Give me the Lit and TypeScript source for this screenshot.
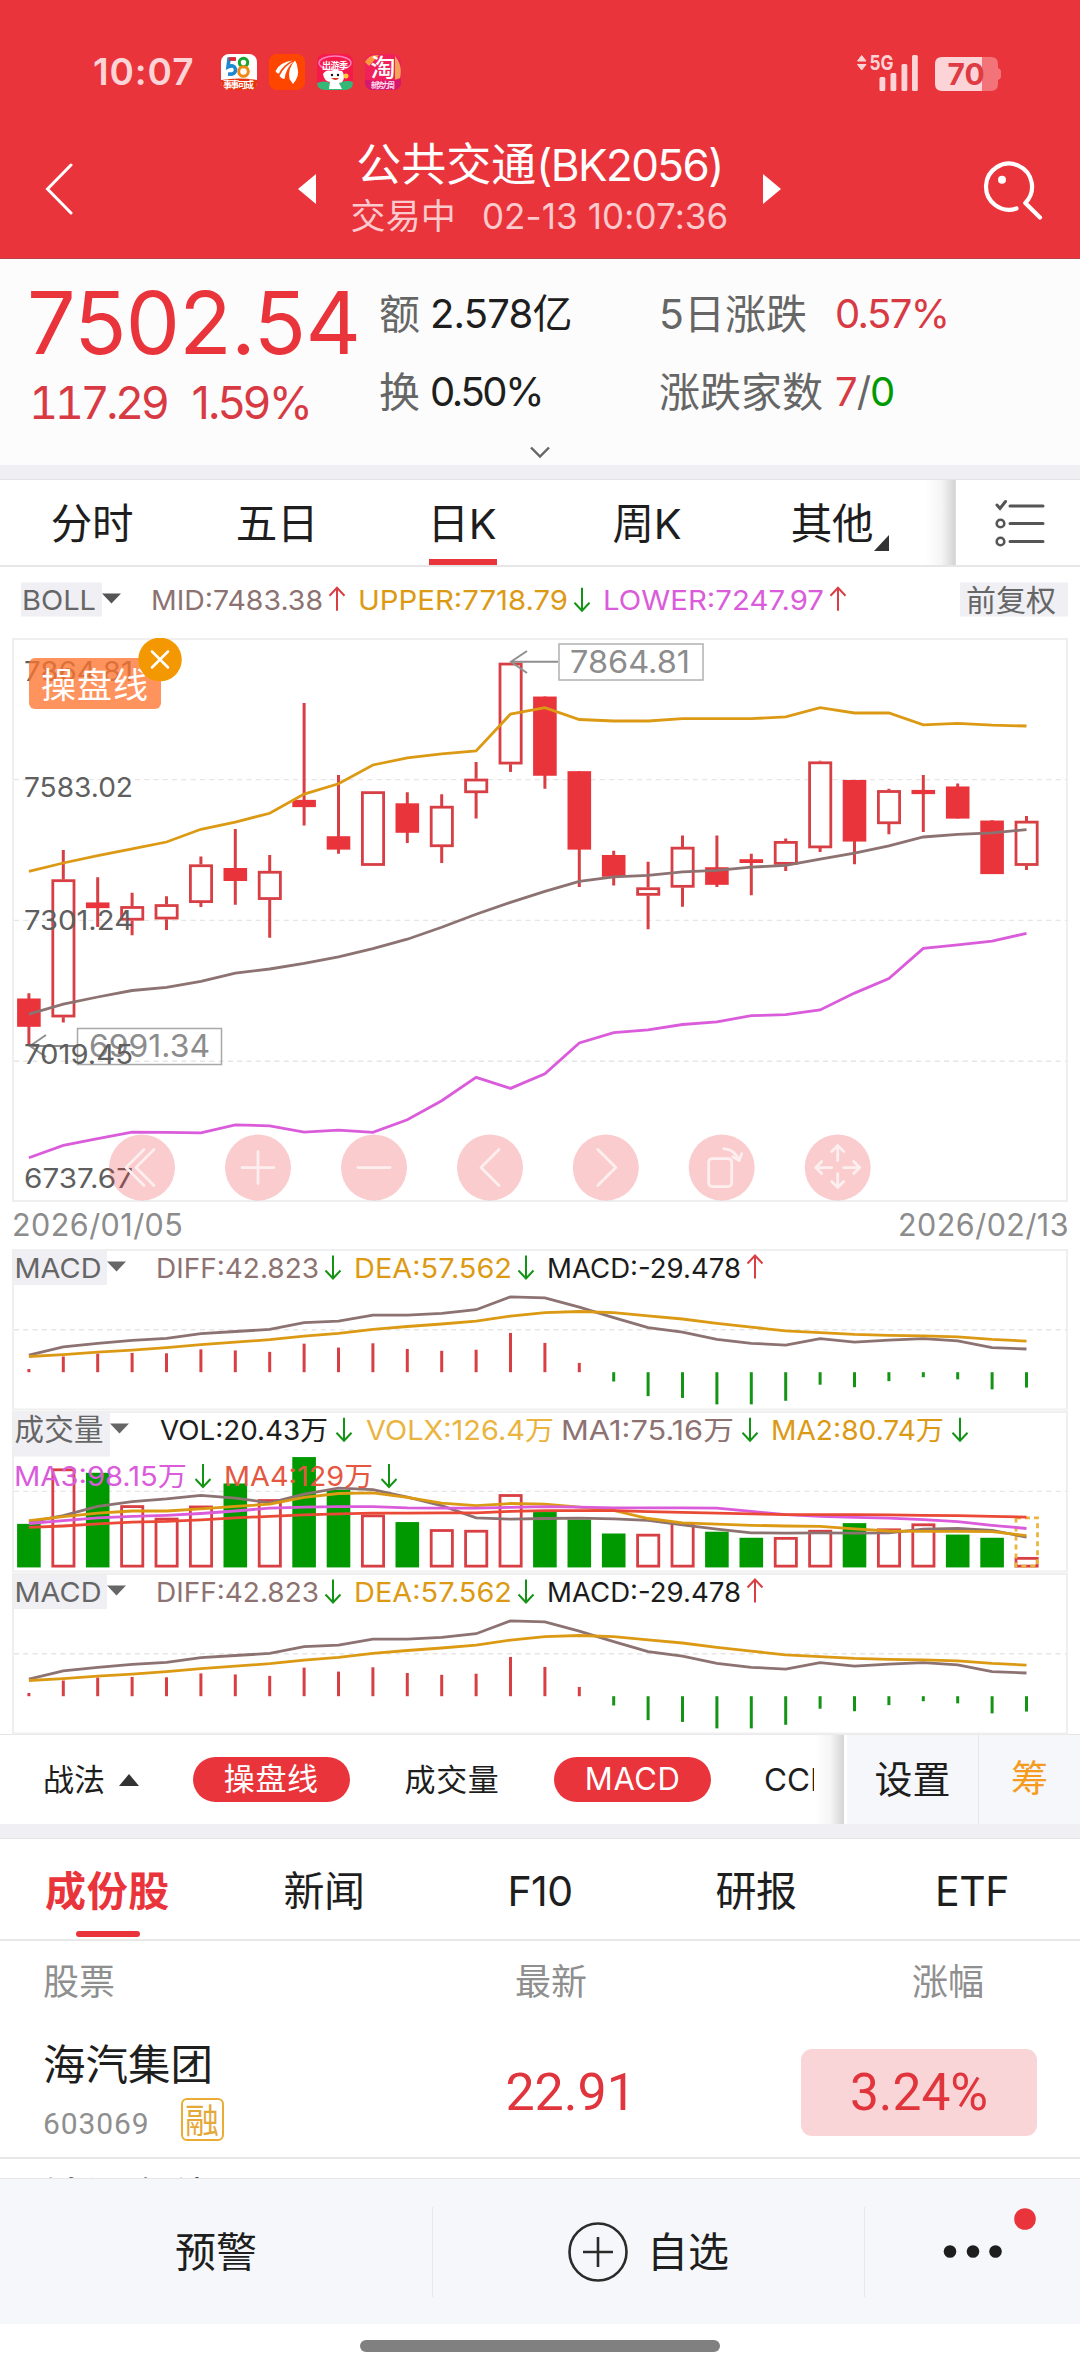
import { LitElement, html, css, svg } from "lit";
import { customElement, property } from "lit/decorators.js";

const RED = "#ea343b";
const WICK = "#d83f45";
const GREEN = "#009a00";
const BROWN = "#8d7272";
const GOLD = "#dc9a14";
const PINK = "#da5cdb";
const BRICK = "#ea4a35";

const FIRST_X = 28.9;
const STEP_X = 34.4;
const xAt = (i: number) => FIRST_X + STEP_X * i;

type Scale = (v: number) => number;
const priceY: Scale = (v) => v * 0.3827 - 18;
const macdY: Scale = (v) => (v - 165) / 2.8;
const volY: Scale = (v) => (v - 619) / 2.8;

const polyline = (values: number[], y: Scale, color: string, width = 2.8) => svg`
  <polyline fill="none" stroke=${color} stroke-width=${width}
    points=${values.map((v, i) => `${xAt(i).toFixed(1)},${y(v).toFixed(1)}`).join(" ")} />`;

/* wick top, body top, body bottom, wick bottom, filled */
const CANDLES: [number, number, number, number, boolean][] = [
  [975, 989, 1063, 1110, true], [601, 678, 1038, 1052, false], [672, 738, 753, 802, true],
  [713, 748, 785, 824, false], [722, 743, 782, 810, false], [618, 639, 739, 750, false],
  [546, 648, 682, 744, true], [614, 656, 731, 830, false], [217, 470, 489, 537, true],
  [405, 565, 600, 611, true], [448, 448, 642, 642, false], [450, 479, 556, 583, true],
  [455, 486, 593, 635, false], [371, 415, 452, 519, false], [112, 112, 377, 397, false],
  [200, 200, 407, 441, true], [395, 395, 600, 698, true], [603, 614, 671, 694, true],
  [632, 699, 720, 808, false], [563, 593, 699, 749, false], [563, 646, 692, 698, true],
  [611, 625, 635, 719, true], [571, 578, 639, 656, false], [368, 370, 596, 606, false],
  [418, 418, 579, 638, true], [441, 445, 533, 560, false], [405, 444, 455, 554, true],
  [427, 435, 519, 519, true], [523, 524, 664, 664, true], [512, 525, 642, 653, false],
];
const UPPER = [657, 635, 616, 598, 580, 547, 528, 505, 455, 428, 379, 360, 350, 342, 246, 229, 260, 264, 264, 258, 258, 258, 253, 229, 243, 243, 274, 270, 275, 277];
const MID = [1030, 1004, 985, 968, 960, 944, 923, 912, 897, 880, 859, 834, 803, 769, 738, 709, 683, 671, 667, 658, 654, 646, 641, 625, 609, 590, 567, 560, 556, 548];
const LOWER = [1405, 1373, 1355, 1338, 1339, 1340, 1319, 1322, 1338, 1333, 1339, 1306, 1256, 1195, 1224, 1186, 1105, 1078, 1071, 1057, 1050, 1034, 1031, 1019, 975, 937, 858, 849, 839, 819];

const DIFF = [462, 439, 429, 421, 415, 402, 396, 390, 371, 367, 350, 350, 345, 335, 299, 302, 328, 357, 385, 398, 418, 429, 434, 416, 426, 420, 416, 422, 441, 445];
const DEA = [466, 461, 454, 448, 441, 433, 426, 419, 409, 401, 390, 382, 375, 367, 353, 343, 340, 343, 352, 361, 373, 384, 394, 399, 404, 407, 408, 411, 418, 423];
const HIST = [501, 466, 458, 456, 457, 446, 449, 453, 430, 441, 429, 445, 450, 447, 400, 428, 484, 536, 577, 582, 600, 600, 590, 545, 552, 535, 524, 530, 558, 553];
const HIST_BASE = 510;

/* bar top, falling day */
const VOLUMES: [number, boolean][] = [
  [935, true], [780, false], [792, true], [883, false], [918, false], [884, false], [822, true],
  [866, false], [748, true], [840, true], [909, false], [930, true], [950, false], [952, false],
  [852, false], [902, true], [923, true], [962, true], [963, false], [930, false], [957, true],
  [974, true], [972, false], [952, false], [933, true], [948, false], [934, false], [965, true],
  [974, true], [1028, false],
];
const VOL_BASE = 1057;
const MA1 = [930, 912, 886, 873, 865, 855, 863, 876, 852, 835, 839, 860, 884, 918, 922, 920, 919, 921, 925, 938, 950, 960, 961, 960, 961, 960, 950, 948, 953, 972];
const MA2 = [926, 915, 905, 899, 899, 893, 886, 880, 861, 850, 848, 861, 877, 884, 878, 880, 888, 897, 920, 932, 936, 939, 941, 942, 949, 955, 956, 956, 957, 968];
const MA3 = [934, 926, 918, 914, 911, 906, 899, 891, 888, 887, 887, 890, 891, 891, 889, 887, 888, 890, 890, 890, 891, 900, 909, 914, 917, 919, 923, 929, 939, 948];
const MA4 = [945, 941, 935, 930, 928, 924, 918, 914, 910, 907, 905, 905, 904, 904, 900, 898, 898, 898, 901, 903, 905, 907, 909, 909, 909, 910, 911, 912, 914, 916];

interface Legend { text: string; x: number; width: number; color: string; arrow?: "up" | "down"; arrowX?: number; }

const arrow = (dir: "up" | "down", x: number, base: number) => {
  const t = base - 22, b = base + 1;
  return dir === "up"
    ? svg`<path d="M${x} ${b}V${t}M${x - 7.5} ${t + 8}L${x} ${t}L${x + 7.5} ${t + 8}" fill="none" stroke=${WICK} stroke-width="2"/>`
    : svg`<path d="M${x} ${t}V${b}M${x - 7.5} ${b - 8}L${x} ${b}L${x + 7.5} ${b - 8}" fill="none" stroke="#149414" stroke-width="2"/>`;
};

const legend = (items: Legend[], base: number) => items.map((l) => svg`
  <text x=${l.x} y=${base} font-size="27.5" fill=${l.color} textLength=${l.width} lengthAdjust="spacingAndGlyphs">${l.text}</text>
  ${l.arrow ? arrow(l.arrow, l.arrowX!, base) : ""}`);

const MACD_LEGEND: Legend[] = [
  { text: "DIFF:42.823", x: 156, width: 163, color: BROWN, arrow: "down", arrowX: 333 },
  { text: "DEA:57.562", x: 354, width: 158, color: GOLD, arrow: "down", arrowX: 526 },
  { text: "MACD:-29.478", x: 547, width: 194, color: "#1c1c1c", arrow: "up", arrowX: 755 },
];

const frame = (h: number) => svg`<rect x="13" y="1" width="1054" height=${h} fill="none" stroke="#efefef" stroke-width="2"/>`;
const guide = (y: number) => svg`<line x1="14" x2="1067" y1=${y} y2=${y} stroke="#e6e6e6" stroke-width="1.4" stroke-dasharray="5 4.3"/>`;

const chartStyles = css`
  :host { display: block; }
  svg { display: block; }
  text { font-family: Inter, "Noto Sans CJK SC", sans-serif; }
`;

@customElement("price-chart")
export class PriceChart extends LitElement {
  static styles = chartStyles;

  private controls() {
    const xs = [142, 258, 374, 490, 605.8, 721.7, 837.7];
    const icons = [
      "M2 -18L-16 0L2 18M12 -18L-6 0L12 18",
      "M-16 0H16M0 -16V16",
      "M-16 0H16",
      "M9 -18L-9 0L9 18",
      "M-8 -18L10 0L-8 18",
      "M-9 -9H6Q10 -9 10 -5V15Q10 19 6 19H-9Q-13 19 -13 15V-5Q-13 -9 -9 -9ZM2 -19Q14 -18 17 -7M11 -11L17.5 -7L20 -14",
      "M0 -22V-7M-6 -16L0 -22L6 -16M0 20V6M-6 14L0 20L6 14M-22 0H-6M-16 -6L-22 0L-16 6M22 0H6M16 -6L22 0L16 6",
    ];
    return xs.map((x, i) => svg`<g transform="translate(${x} 529.6)">
      <circle r="33" fill="#ea343b" opacity=".25"/>
      <path d=${icons[i]} fill="none" stroke="#fdeff0" stroke-width="2.8" stroke-linecap="round" stroke-linejoin="round"/></g>`);
  }

  render() {
    const labels: [string, number][] = [["7864.81", 160], ["7583.02", 462], ["7301.24", 809], ["7019.45", 1160], ["6737.67", 1483]];
    return html`<svg width="1080" height="564" viewBox="0 0 1080 564">
      <rect x="13" y="1" width="1054" height="562" fill="none" stroke="#efefef" stroke-width="2"/>
      ${[417, 785, 1153].map((v) => guide(priceY(v)))}
      ${CANDLES.map(([hi, top, bot, lo, filled], i) => {
        const x = xAt(i), t = priceY(top), b = priceY(bot);
        return svg`<path d="M${x} ${priceY(hi)}V${t}M${x} ${b}V${priceY(lo)}${filled ? `M${x} ${t}V${b}` : ""}" stroke=${WICK} stroke-width="3"/>
          ${filled
            ? svg`<rect x=${x - 11.8} y=${t} width="23.6" height=${b - t} fill=${RED}/>`
            : svg`<rect x=${x - 10.5} y=${t + 1.2} width="21.2" height=${Math.max(b - t - 2.4, 1)} fill="#fff" stroke=${WICK} stroke-width="2.8"/>`}`;
      })}
      ${polyline(UPPER, priceY, GOLD)}
      ${polyline(MID, priceY, BROWN)}
      ${polyline(LOWER, priceY, PINK)}
      <g fill="none" stroke="#8f8f8f" stroke-width="2">
        <path d="M558 23.7H511M527 13L511 23.7L527 35"/>
        <path d="M77 408H30M46 397L30 408L46 419"/>
        <rect x="559" y="6" width="144" height="36" stroke="#b0b0b0" stroke-width="1.5"/>
        <rect x="77.5" y="390.5" width="144" height="36" stroke="#a8a8a8" stroke-width="1.5"/>
      </g>
      <text x="570" y="35" font-size="31" fill="#8c8c8c" textLength="120" lengthAdjust="spacingAndGlyphs">7864.81</text>
      <text x="89" y="419" font-size="31" fill="#8c8c8c" textLength="121" lengthAdjust="spacingAndGlyphs">6991.34</text>
      ${labels.map(([t, v]) => svg`<text x="24" y=${priceY(v)} font-size="27.5" fill="#5f5f5f" textLength="109" lengthAdjust="spacingAndGlyphs">${t}</text>`)}
      <rect x="29" y="20" width="132" height="51" rx="6" fill="#ff7430" opacity=".78"/>
      <text x="41" y="60" font-size="35" fill="#fff" textLength="107">操盘线</text>
      <circle cx="160" cy="21.5" r="21.8" fill="#f39800"/>
      <path d="M152 13.5L168 29.5M168 13.5L152 29.5" stroke="#fff" stroke-width="2.5" stroke-linecap="round"/>
      ${this.controls()}
    </svg>`;
  }
}

@customElement("macd-panel")
export class MacdPanel extends LitElement {
  static styles = chartStyles;

  render() {
    const base = macdY(HIST_BASE);
    return html`<svg width="1080" height="162" viewBox="0 0 1080 162">
      ${frame(159.5)}
      ${guide(macdY(391))}
      ${polyline(DIFF, macdY, BROWN)}
      ${polyline(DEA, macdY, GOLD)}
      ${HIST.map((v, i) => svg`<line x1=${xAt(i)} x2=${xAt(i)} y1=${base} y2=${macdY(v)} stroke=${v < HIST_BASE ? WICK : "#149414"} stroke-width="3"/>`)}
      <rect x="14" y="2" width="93" height="34" fill="#efeff4"/>
      <text x="14.5" y="28.5" font-size="27.5" fill="#666" textLength="87" lengthAdjust="spacingAndGlyphs">MACD</text>
      <path d="M107 12.5H126L116.5 22.5Z" fill="#666"/>
      ${legend(MACD_LEGEND, 28.5)}
    </svg>`;
  }
}

@customElement("volume-panel")
export class VolumePanel extends LitElement {
  static styles = chartStyles;

  render() {
    const b = volY(VOL_BASE);
    const row1: Legend[] = [
      { text: "VOL:20.43万", x: 160, width: 168, color: "#1c1c1c", arrow: "down", arrowX: 344 },
      { text: "VOLX:126.4万", x: 366, width: 188, color: "#eab440" },
      { text: "MA1:75.16万", x: 561, width: 173, color: BROWN, arrow: "down", arrowX: 750 },
      { text: "MA2:80.74万", x: 771, width: 173, color: GOLD, arrow: "down", arrowX: 960 },
    ];
    const row2: Legend[] = [
      { text: "MA3:98.15万", x: 14, width: 173, color: PINK, arrow: "down", arrowX: 203 },
      { text: "MA4:129万", x: 224, width: 149, color: "#e5573f", arrow: "down", arrowX: 389 },
    ];
    return html`<svg width="1080" height="162" viewBox="0 0 1080 162">
      ${frame(159.5)}
      ${guide(volY(844))}
      ${VOLUMES.map(([v, down], i) => {
        const x = xAt(i), t = volY(v);
        return down
          ? svg`<rect x=${x - 11.8} y=${t} width="23.6" height=${b - t} fill=${GREEN}/>`
          : svg`<rect x=${x - 10.5} y=${t + 1.3} width="21.2" height=${b - t - 2.6} fill="none" stroke=${WICK} stroke-width="2.8"/>`;
      })}
      <rect x=${xAt(29) - 10.5} y=${volY(918)} width="21.5" height=${b - volY(918) - 1.3} fill="none" stroke="#eab440" stroke-width="2.8" stroke-dasharray="5 4"/>
      ${polyline(MA1, volY, BROWN)}
      ${polyline(MA2, volY, GOLD)}
      ${polyline(MA3, volY, PINK)}
      ${polyline(MA4, volY, BRICK)}
      <rect x="14" y="2" width="96" height="43.5" fill="#efeff4"/>
      <text x="14.5" y="29" font-size="29.5" fill="#666" textLength="89">成交量</text>
      <path d="M110 12.5H129L119.5 22.5Z" fill="#666"/>
      ${legend(row1, 28.8)}
      ${legend(row2, 75)}
    </svg>`;
  }
}

@customElement("status-bar")
export class StatusBar extends LitElement {
  static styles = css`
    :host { display: flex; align-items: center; height: 143px; padding: 0 79px 0 93px; box-sizing: border-box; color: #fcd3d6; }
    .time { font: 600 37px/40px Inter, sans-serif; letter-spacing: 0.9px; width: 128px; white-space: nowrap; }
    .apps { display: flex; gap: 12px; flex: 1; }
    svg { display: block; }
    .cjk { font-family: "Noto Sans CJK SC", sans-serif; }
    .num { font-family: Inter, sans-serif; }
  `;
  render() {
    return html`
      <span class="time">10:07</span>
      <div class="apps">
        <svg width="36" height="36" viewBox="0 0 36 36"><rect width="36" height="36" rx="8" fill="#fff"/>
          <path d="M14 5H8L7 13Q13 10 14.5 15Q15 21 7 20" fill="none" stroke="#1e88d2" stroke-width="3.6"/><path d="M8 5H15" stroke="#e8262d" stroke-width="3.6"/>
          <circle cx="22.5" cy="8.5" r="4.2" fill="none" stroke="#17a52c" stroke-width="3"/><circle cx="22.5" cy="17.5" r="4.8" fill="none" stroke="#f08a16" stroke-width="3"/>
          <path d="M0 26Q18 23 36 26V28Q36 36 28 36H8Q0 36 0 28Z" fill="#e6350f"/>
          <text class="cjk" x="2" y="34" font-size="9" font-weight="700" fill="#fff" textLength="31">事事可成</text></svg>
        <svg width="36" height="36" viewBox="0 0 36 36"><rect width="36" height="36" rx="8" fill="#ff4600"/>
          <path d="M23.5 6.5Q11 8 6.5 17Q8 20 10 19.5Q14 11 23.5 6.5ZM24.5 7.5Q15 12 10.5 22Q13 25.5 15.5 25Q17 14 24.5 7.5ZM26 6.5Q18.5 14 20.5 25L24 30Q31 22 28.5 14Q28 9 26 6.5Z" fill="#fff"/></svg>
        <svg width="36" height="36" viewBox="0 0 36 36"><rect width="36" height="36" rx="8" fill="#f51a49"/>
          <ellipse cx="18" cy="9" rx="16" ry="7" fill="none" stroke="#ff7fc0" stroke-width="1.5"/>
          <path d="M0 29Q8 25 18 31Q28 25 36 28Q36 36 28 36H8Q0 36 0 28Z" fill="#35b877"/>
          <path d="M6 20Q9 15 14 17Q18 14 23 17Q26 16 27 22Q27 29 22 29L25 35H12L13 28Q7 27 6 20Z" fill="#fff"/>
          <circle cx="15" cy="21" r="1.2" fill="#111"/><circle cx="21" cy="21" r="1.2" fill="#111"/><path d="M14 24Q19 28 22 24Z" fill="#d32"/><circle cx="29" cy="22" r="2.5" fill="#ffc93a"/>
          <text class="cjk" x="5" y="14.5" font-size="9" font-weight="700" fill="#fff" textLength="26">出游季</text></svg>
        <svg width="36" height="36" viewBox="0 0 36 36"><rect width="36" height="36" rx="8" fill="#f0205a"/>
          <path d="M0 8Q4 0 14 1L4 12Z" fill="#ff9a3c"/><path d="M30 2Q38 12 35 24L30 26Z" fill="#f5a35a"/><path d="M0 26Q18 28 36 25V28Q36 36 28 36H8Q0 36 0 28Z" fill="#d3186d"/>
          <text class="cjk" x="5.5" y="23" font-size="25" font-weight="500" fill="#fff">淘</text>
          <text class="cjk" x="6" y="34" font-size="7.5" font-weight="700" fill="#ffd9ea" textLength="24">新势力周</text></svg>
      </div>
      <svg width="144" height="40" viewBox="857 51 144 40">
        <path d="M857.5 60H866L861.7 54.5ZM857.5 63.5H866L861.7 69Z" fill="#fcd3d6" stroke="#fcd3d6" stroke-width="1"/>
        <text class="num" x="869.5" y="69" font-size="20.5" font-weight="700" fill="#fcd3d6" textLength="24" lengthAdjust="spacingAndGlyphs">5G</text>
        <rect x="879.5" y="76" width="5.8" height="14" rx="1.5" fill="#fcd3d6"/><rect x="890.5" y="72" width="5.8" height="18" rx="1.5" fill="#fcd3d6"/>
        <rect x="901.5" y="63" width="5.8" height="27" rx="1.5" fill="#fcd3d6"/><rect x="912" y="54" width="5.8" height="36" rx="1.5" fill="#fcd3d6"/>
        <path d="M942 56H982V90H942Q935 90 935 83V63Q935 56 942 56Z" fill="#fcd3d6"/>
        <path d="M982 56H991Q998 56 998 63V67Q1001 68 1001 70V76Q1001 78 998 79V83Q998 90 991 90H982Z" fill="#f27378"/>
        <text class="num" x="947.5" y="84" font-size="30" font-weight="700" fill="#de3b44" textLength="37" lengthAdjust="spacingAndGlyphs">70</text>
      </svg>`;
  }
}

@customElement("app-root")
export class AppRoot extends LitElement {
  @property({ type: Number }) activePeriod = 2;

  static styles = css`
    :host { display: block; width: 1080px; height: 2373px; overflow: hidden; background: #fff; color: #1e1e1e; font-family: Inter, "Noto Sans CJK SC", sans-serif; }
    * { box-sizing: border-box; }
    svg { display: block; }
    .top { background: #ea343b; height: 259px; border-bottom: 1px solid #b8434a; }
    .nav { display: grid; grid-template-columns: 253px 483px 1fr; height: 115px; padding: 18px 0 0 45px; color: #fff; }
    .back { margin-top: 2px; }
    .find { margin-left: 202px; }
    .mid { display: flex; align-items: center; justify-content: space-between; height: 56px; }
    .titles { text-align: center; white-space: nowrap; padding-top: 2px; }
    .name { font-size: 45px; line-height: 52px; height: 51px; }
    .name .lat { font-size: 44px; letter-spacing: -1.6px; }
    .sub { display: flex; justify-content: center; gap: 26px; font-size: 35px; line-height: 52px; color: #fcc9cd; letter-spacing: 0.1px; }

    .quote { height: 206px; background: #fcfcfc; position: relative; display: grid; grid-template-columns: 350px 280px 1fr; padding: 16px 0 0 29px; }
    .price { font-size: 86px; line-height: 94px; color: #ea343b; letter-spacing: -0.7px; margin-left: -2px; padding-top: 1px; }
    .change { display: flex; gap: 25px; font-size: 45px; line-height: 54px; color: #d83a44; letter-spacing: -2.2px; margin-top: 6px; }
    .diff { font-variant-numeric: tabular-nums; letter-spacing: -3.4px; }
    .stats { font-size: 40px; line-height: 78px; white-space: nowrap; letter-spacing: -1.6px; }
    .stats div { display: flex; gap: 10px; }
    .stats .amount { letter-spacing: -0.8px; }
    .stats .turn { letter-spacing: -2.4px; }
    .stats .lab { color: #666; letter-spacing: 0; font-size: 41px; }
    .red { color: #d83a44; }
    .green { color: #009a00; }
    .gray { color: #666; }
    .stats .wide { gap: 28px; }
    .stats .count { gap: 12px; letter-spacing: -1px; }
    .more { position: absolute; left: 530px; top: 187px; }
    .band { height: 15px; background: #f0eff4; border-bottom: 1.5px solid #e4e4e4; }

    .periods { display: flex; height: 87px; border-bottom: 2px solid #e6e6e6; font-size: 41.5px; }
    .plist { flex: 1; display: flex; position: relative; }
    .p { width: 185px; display: flex; align-items: center; justify-content: center; line-height: 84px; position: relative; padding: 2px 1px 0 0; letter-spacing: -0.3px; }
    .p.on::after { content: ""; position: absolute; bottom: 0; left: 58.5px; width: 68px; height: 6px; background: #ea343b; }
    .shade { width: 30px; background: linear-gradient(to left, rgba(60,60,60,.22), rgba(60,60,60,.05) 45%, transparent); }
    .tri { position: absolute; left: 134px; top: 55px; }
    .opts { width: 125px; border-left: 1px solid #ddd; padding: 18px 0 0 39px; }

    .ind { height: 71px; }
    .dates { display: flex; justify-content: space-between; height: 47px; padding: 0 11px 0 12px; font-size: 30.5px; line-height: 46px; color: #8c8c8c; letter-spacing: 0.45px; }

    .tools { display: flex; height: 90px; border-top: 1.5px solid #e4e4e4; font-size: 31px; line-height: 88px; margin-top: -1px; }
    .tl { flex: 1; display: flex; align-items: center; padding-left: 43px; overflow: hidden; white-space: nowrap; }
    .war { width: 150px; display: flex; align-items: center; gap: 14px; }
    .pill { width: 157px; height: 45px; border-radius: 23px; background: #ea343b; color: #fff; text-align: center; line-height: 44px; letter-spacing: 0.6px; }
    .plain { width: 205px; text-align: center; letter-spacing: 0.6px; }
    .cci { margin-left: 53px; width: 50px; overflow: hidden; letter-spacing: 0; font-size: 31.5px; }
    .set { width: 134px; background: #f6f7fa; border-left: 3px solid #fff; text-align: center; font-size: 38px; }
    .chip { width: 102px; background: #f6f7fa; border-left: 1.5px solid #e6e6e8; text-align: center; font-size: 37px; color: #f59b1f; }

    .tabs { display: flex; height: 102px; border-bottom: 2px solid #e8e8e8; font-size: 41px; line-height: 104px; }
    .tab { width: 216px; text-align: center; position: relative; letter-spacing: -0.5px; }
    .tab.on { color: #ea343b; font-weight: 700; letter-spacing: 0.6px; }
    .tab.on::after { content: ""; position: absolute; left: 76px; bottom: 2px; width: 64px; height: 6px; border-radius: 3px; background: #ea343b; }
    .tab:first-child { padding-right: 1px; }

    .thead, .row { display: grid; grid-template-columns: 400px 300px 1fr; padding: 0 43px 0 43px; }
    .thead { height: 84px; font-size: 36px; line-height: 83px; color: #8f8f8f; }
    .thead span:nth-child(2) { text-align: right; padding-right: 156px; }
    .thead span:nth-child(3) { text-align: right; padding-right: 53px; }
    .row { height: 134px; border-bottom: 2px solid #e6e6e6; }
    .nm { font-size: 42.5px; line-height: 50px; padding-top: 15px; }
    .code { display: flex; align-items: flex-start; gap: 31px; margin-top: 8px; height: 44px; font: 30px/52px Roboto, sans-serif; color: #8f8f8f; letter-spacing: 0.9px; }
    .badge { width: 43px; height: 43px; border: 2px solid #eaac35; border-radius: 6px; font: 34px/38px "Noto Sans CJK SC", sans-serif; color: #e5a83a; text-align: center; letter-spacing: 0; display: flex; justify-content: center; }
    .last { font: 52px/136px Roboto, sans-serif; color: #e0353d; text-align: right; padding-right: 107px; }
    .pct { justify-self: end; margin-top: 24px; width: 236px; height: 87px; border-radius: 11px; background: #fad5d7; color: #e0353d; text-align: center; font: 51.5px/87px Roboto, sans-serif; }
    .peek { height: 19px; overflow: hidden; padding-left: 43px; font-size: 42.5px; line-height: 50px; }
    .peek div { margin-top: 14px; }

    .foot { display: flex; height: 146px; border-top: 1.5px solid #e6e6e8; background: #f6f7fa; align-items: center; font-size: 41px; }
    .cell { width: 432px; height: 90px; display: flex; align-items: center; justify-content: center; gap: 19px; line-height: 88px; padding-top: 1px; }
    .cell + .cell { border-left: 1.5px solid #e8e8ea; }
    .cell.dots { flex: 1; padding: 0; }
    .home { height: 49px; display: flex; justify-content: center; padding-top: 16px; }
    .home i { width: 360px; height: 12px; border-radius: 6px; background: #808080; }
  `;

  render() {
    return html`
      <header class="top">
        <status-bar></status-bar>
        <div class="nav">
          <svg class="back" width="30" height="52" viewBox="0 0 30 52"><path d="M26 2L2.5 26L26 50" fill="none" stroke="#fff" stroke-width="3" stroke-linecap="round"/></svg>
          <div class="mid">
            <svg width="18" height="30" viewBox="0 0 18 30"><path d="M18 0V30L0 15Z" fill="#fff"/></svg>
            <div class="titles">
              <div class="name">公共交通<span class="lat">(BK2056)</span></div>
              <div class="sub"><span>交易中</span><span>02-13 10:07:36</span></div>
            </div>
            <svg width="18" height="30" viewBox="0 0 18 30"><path d="M0 0V30L18 15Z" fill="#fff"/></svg>
          </div>
          <svg class="find" width="60" height="60" viewBox="0 0 60 60" fill="none" stroke="#fff" stroke-width="4.2" stroke-linecap="round" stroke-linejoin="round">
            <path d="M33.5 47.4A23 23 0 1 1 42.3 41.9L57 56.5"/><circle cx="19" cy="18.7" r="4" fill="#fff" stroke="none"/></svg>
        </div>
      </header>

      <section class="quote">
        <div><div class="price">7502.54</div><div class="change"><span class="diff">117.29</span><span>1.59%</span></div></div>
        <div class="stats"><div class="amount"><span class="lab">额</span>2.578亿</div><div class="turn"><span class="lab">换</span>0.50%</div></div>
        <div class="stats"><div class="wide"><span class="lab">5日涨跌</span><span class="red">0.57%</span></div>
          <div class="count"><span class="lab">涨跌家数</span><span><span class="red">7</span><span class="gray">/</span><span class="green">0</span></span></div></div>
        <svg class="more" width="20" height="13" viewBox="0 0 20 13"><path d="M1 1.5L10 10.5L19 1.5" fill="none" stroke="#666" stroke-width="2.4"/></svg>
      </section>
      <div class="band"></div>

      <nav class="periods">
        <div class="plist">
          ${["分时", "五日", "日K", "周K", "其他"].map((t, i) => html`<div class="p ${i === this.activePeriod ? "on" : ""}">${t}${i === 4
            ? html`<svg class="tri" width="15" height="16" viewBox="0 0 15 16"><path d="M15 0V16H0Z" fill="#333"/></svg>` : ""}</div>`)}
        </div>
        <div class="shade"></div>
        <div class="opts"><svg width="50" height="50" viewBox="0 0 50 50" fill="none" stroke="#555" stroke-width="3" stroke-linecap="round">
          <path d="M15 8H48M15 25.5H48M15 43.5H48M2 7L5 10.5L10.5 3.5"/><circle cx="5.5" cy="25.5" r="3.8" stroke-width="2.6"/><circle cx="5.5" cy="43.5" r="3.8" stroke-width="2.6"/></svg></div>
      </nav>

      <svg class="ind" width="1080" height="71" viewBox="0 0 1080 71">
        <rect x="21" y="15.5" width="81" height="34" fill="#efeff4"/>
        <text x="22" y="42.5" font-size="27.5" fill="#666" textLength="74" lengthAdjust="spacingAndGlyphs">BOLL</text>
        <path d="M102 26.5H121L111.5 36.5Z" fill="#555"/>
        ${legend([
          { text: "MID:7483.38", x: 151, width: 172, color: BROWN, arrow: "up", arrowX: 337 },
          { text: "UPPER:7718.79", x: 358, width: 210, color: GOLD, arrow: "down", arrowX: 582 },
          { text: "LOWER:7247.97", x: 603, width: 221, color: PINK, arrow: "up", arrowX: 838 },
        ], 42.8)}
        <rect x="960" y="15.5" width="108" height="34" fill="#efeff4"/>
        <text x="966" y="43.5" font-size="30" fill="#666" textLength="90">前复权</text>
      </svg>
      <price-chart></price-chart>
      <div class="dates"><span>2026/01/05</span><span>2026/02/13</span></div>
      <macd-panel></macd-panel>
      <volume-panel></volume-panel>
      <macd-panel></macd-panel>

      <div class="tools">
        <div class="tl">
          <div class="war">战法<svg width="20" height="12" viewBox="0 0 20 12"><path d="M0 12H20L10 0Z" fill="#333"/></svg></div>
          <div class="pill">操盘线</div><div class="plain">成交量</div><div class="pill">MACD</div><div class="cci">CCI</div>
        </div>
        <div class="shade"></div>
        <div class="set">设置</div><div class="chip">筹</div>
      </div>
      <div class="band"></div>

      <nav class="tabs">${["成份股", "新闻", "F10", "研报", "ETF"].map((t, i) => html`<div class="tab ${i === 0 ? "on" : ""}">${t}</div>`)}</nav>
      <div class="thead"><span>股票</span><span>最新</span><span>涨幅</span></div>
      <div class="row">
        <div><div class="nm">海汽集团</div><div class="code">603069<span class="badge">融</span></div></div>
        <div class="last">22.91</div>
        <div class="pct">3.24%</div>
      </div>
      <div class="peek"><div>锦江在线</div></div>

      <footer class="foot">
        <div class="cell">预警</div>
        <div class="cell"><svg width="60" height="60" viewBox="0 0 60 60" fill="none" stroke="#2b2b2b" stroke-width="2.6"><circle cx="30" cy="30" r="28.5"/><path d="M15 30H45M30 15V45"/></svg>自选</div>
        <div class="cell dots"><svg width="150" height="90" viewBox="898 2207 150 90"><g fill="#1e1e1e"><circle cx="950" cy="2251.5" r="6.3"/><circle cx="973" cy="2251.5" r="6.3"/><circle cx="995.5" cy="2251.5" r="6.3"/></g><circle cx="1025" cy="2219" r="10.8" fill="#ea343b"/></svg></div>
      </footer>
      <div class="home"><i></i></div>`;
  }
}
